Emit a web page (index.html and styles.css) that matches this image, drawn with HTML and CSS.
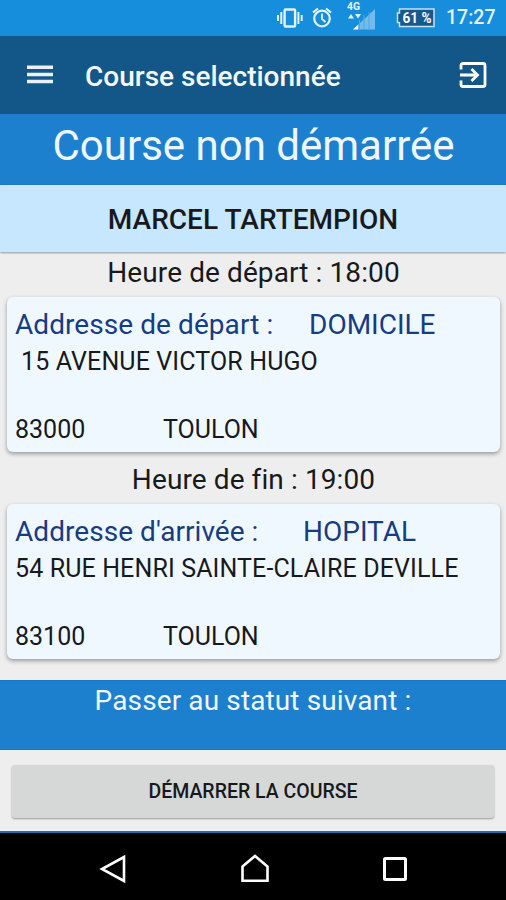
FILE: index.html
```html
<!DOCTYPE html>
<html lang="fr">
<head>
<meta charset="utf-8">
<title>Course selectionnée</title>
<link rel="stylesheet" href="styles.css">
</head>
<body>
<div class="screen">
  <div class="status-bar">
    <svg class="status-icons" width="160" height="36" viewBox="276 0 160 36">
      <g fill="none" stroke="#e4f3fd">
        <rect x="284.600" y="9.500" width="10.500" height="17" rx="1" stroke-width="2.400"/>
        <path d="M281.300 12v12M298.400 12v12" stroke-width="2"/>
        <path d="M278 15v6M301.700 15v6" stroke-width="2"/>
        <circle cx="322" cy="18.500" r="7.800" stroke-width="2.200"/>
        <path d="M322 13.500v5.500l3.500 3" stroke-width="1.800"/>
        <path d="M313 12.500l5-4M331 12.500l-5-4" stroke-width="2.200"/>
      </g>
      <path d="M348 18.500l3-4.500 3 4.500zM355 14h6l-3 4.500z" fill="#e4f3fd"/>
      <path d="M353 29.500L375 9v20.500z" fill="#74bbeb"/>
      <path d="M353 29.500l5-4.700v4.700z" fill="#e4f3fd"/>
      <path d="M359.500 20v10M364 15v15M369 12v18" stroke="#4da7e4" stroke-width="1"/>
      <path d="M399.500 9H434v17.500H399.500v-4H397.500v-9.500h2z" fill="#17598d" stroke="#c5e1f3" stroke-width="1.500"/>
      <text class="network" x="347" y="9.500" textLength="13" lengthAdjust="spacingAndGlyphs">4G</text>
      <text class="battery" x="402.500" y="23" textLength="29" lengthAdjust="spacingAndGlyphs">61 %</text>
    </svg>
    <span class="clock">17:27</span>
  </div>
  <header class="app-bar">
    <svg class="menu-icon" width="28" height="20" viewBox="0 0 28 20"><path d="M1 2.300h26M1 9.500h26M1 16.500h26" stroke="#edf0fb" stroke-width="3.600"/></svg>
    <h1 class="title">Course selectionnée</h1>
    <svg class="exit-icon" width="28" height="28" viewBox="0 0 28 28"><path d="M2 8.500V4.500a2 2 0 0 1 2-2h20a2 2 0 0 1 2 2v19a2 2 0 0 1-2 2H4a2 2 0 0 1-2-2v-4M1 14h17M12.500 8l6 6-6 6" fill="none" stroke="#fff" stroke-width="2.800"/></svg>
  </header>
  <div class="state"><span class="state-text">Course non démarrée</span></div>
  <div class="patient"><span class="patient-name">MARCEL TARTEMPION</span></div>
  <main class="content">
    <div class="time"><span class="time-start">Heure de départ : 18:00</span></div>
    <section class="card">
      <div class="card-head"><span class="label-start">Addresse de départ :</span><span class="place-start">DOMICILE</span></div>
      <div class="street street-start">15 AVENUE VICTOR HUGO</div>
      <div class="city"><span class="zip">83000</span><span class="town">TOULON</span></div>
    </section>
    <div class="time time-second"><span class="time-end">Heure de fin : 19:00</span></div>
    <section class="card">
      <div class="card-head"><span class="label-end">Addresse d'arrivée :</span><span class="place-end">HOPITAL</span></div>
      <div class="street street-end">54 RUE HENRI SAINTE-CLAIRE DEVILLE</div>
      <div class="city"><span class="zip">83100</span><span class="town">TOULON</span></div>
    </section>
  </main>
  <div class="next"><span class="next-text">Passer au statut suivant :</span></div>
  <div class="actions"><button class="start" type="button"><span class="start-text">DÉMARRER LA COURSE</span></button></div>
  <nav class="nav-bar">
    <svg width="28" height="30" viewBox="0 0 28 30"><path d="M25 3v24L3 15z" fill="none" stroke="#fff" stroke-width="2.600"/></svg>
    <svg width="30" height="30" viewBox="0 0 30 30"><path d="M2.500 12.500L15 2l12.500 10.500v14.200h-25z" fill="none" stroke="#fff" stroke-width="2.600"/></svg>
    <svg width="26" height="26" viewBox="0 0 26 26"><rect x="2.500" y="2.500" width="21" height="21" rx="1" fill="none" stroke="#fff" stroke-width="3"/></svg>
  </nav>
</div>
</body>
</html>
```
FILE: styles.css
```css
* { box-sizing: border-box; }
body { margin: 0; font-family: Roboto, "Liberation Sans", sans-serif; color: #17191c; }
.screen { width: 506px; height: 900px; display: flex; flex-direction: column; background: #eee; overflow: hidden; white-space: nowrap; }
.status-bar { height: 36px; flex: none; background: #168edc; display: flex; align-items: center; justify-content: flex-end; padding-right: 11px; gap: 10px; }
.status-icons { flex: none; }
.network { font-size: 10px; font-weight: 700; fill: #e4f3fd; }
.battery { font-size: 14px; font-weight: 700; fill: #fff; }
.clock { width: 49px; font-size: 19.500px; font-weight: 500; color: #e4f3fd; line-height: 38px; }
.app-bar { height: 78px; flex: none; background: #125788; display: flex; align-items: center; padding: 0 19px 0 26px; }
.menu-icon { flex: none; }
.title { margin: 3px 0 0 31px; font-size: 28px; font-weight: 500; color: #f4f7fd; flex: 1; }
.exit-icon { flex: none; }
.state { height: 71px; flex: none; background: #1c80ce; border-bottom: 1px solid #1677c4; color: #f0f6fd; text-align: center; font-size: 42px; line-height: 63px; padding-left: 1px; }
.patient { height: 67px; flex: none; background: #c7e7ff; text-align: center; font-size: 28px; font-weight: 500; line-height: 69px; box-shadow: 0 1px 2px #999; position: relative; }
.patient-name { letter-spacing: .04px; }
.content { flex: none; height: 428px; padding: 0 6px 0 7px; }
.time { height: 45px; text-align: center; font-size: 28px; line-height: 41px; letter-spacing: .1px; }
.time-second { height: 52px; line-height: 55px; }
.card { height: 155px; background: #f0f8ff; border-radius: 6px; box-shadow: 0 2px 4px #999; padding: 9px 8px 0; }
.card-head { height: 38px; line-height: 38px; font-size: 28px; color: #163c82; display: flex; }
.label-start { width: 294px; letter-spacing: .07px; }
.label-end { width: 288px; letter-spacing: .05px; }
.street { height: 34px; line-height: 36px; font-size: 25px; letter-spacing: .12px; }
.street-start { padding-left: 6px; }
.city { margin-top: 34px; height: 34px; line-height: 36px; font-size: 25px; display: flex; }
.zip { width: 148px; }
.next { height: 70px; flex: none; background: #1c80ce; color: #f0f6fd; border-top: 1px solid #1677c4; border-bottom: 1px solid #1677c4; text-align: center; font-size: 28px; line-height: 40px; letter-spacing: .12px; }
.actions { height: 83px; flex: none; border-bottom: 2px solid #1d6daf; padding: 15px 12px 0; }
.start { display: block; width: 100%; height: 53px; border: 0; border-radius: 3px; background: #d6d8d7; box-shadow: 0 1px 2px #999; font: 500 19.500px Roboto, sans-serif; color: #17191c; padding: 0; }
.nav-bar { flex: 1; background: #000; display: flex; align-items: center; padding: 5px 98px 0 99px; justify-content: space-between; }
```
